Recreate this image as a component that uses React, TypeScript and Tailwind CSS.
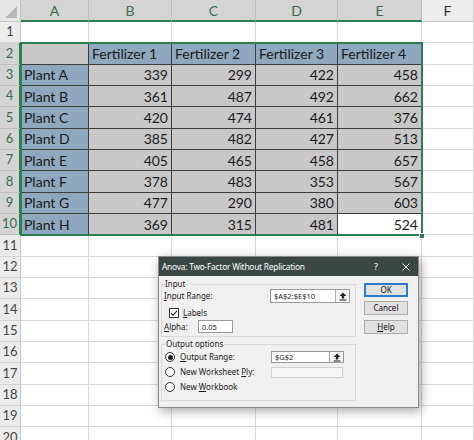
import React from "react";

const COLS = ["A", "B", "C", "D", "E", "F"];
const HEAD = ["Fertilizer 1", "Fertilizer 2", "Fertilizer 3", "Fertilizer 4"];
const DATA: [string, number[]][] = [
  ["Plant A", [339, 299, 422, 458]],
  ["Plant B", [361, 487, 492, 662]],
  ["Plant C", [420, 474, 461, 376]],
  ["Plant D", [385, 482, 427, 513]],
  ["Plant E", [405, 465, 458, 657]],
  ["Plant F", [378, 483, 353, 567]],
  ["Plant G", [477, 290, 380, 603]],
  ["Plant H", [369, 315, 481, 524]],
];
const TOTAL_ROWS = 20;

function RowHeader({ n }: { n: number }) {
  const sel = n >= 2 && n <= 10;
  return (
    <div
      className={
        "flex items-center justify-center border-b text-[13px] " +
        (sel
          ? "bg-[#d4d4d4] border-[#c0c0c0] border-r-2 border-r-[#2e7d50] text-[#3d6a4f]"
          : "bg-[#ececec] border-[#d4d4d4] border-r border-r-[#c6c6c6] text-[#444]")
      }
    >
      {n}
    </div>
  );
}

function Cell({
  children,
  kind,
  align = "left",
}: {
  children?: React.ReactNode;
  kind: "blank" | "label" | "corner" | "data" | "white";
  align?: "left" | "right";
}) {
  const bg =
    kind === "label"
      ? "bg-[#8ea8bf] border-[#3d3d3d]"
      : kind === "corner" || kind === "data"
        ? "bg-[#c8c8c8] border-[#3d3d3d]"
        : kind === "white"
          ? "bg-white border-[#3d3d3d]"
          : "bg-white border-[#dadada]";
  return (
    <div
      className={
        "flex items-center border-r border-b px-[3px] text-[14px] text-[#1b1b1b] overflow-hidden whitespace-nowrap " +
        bg +
        (align === "right" ? " justify-end" : "")
      }
    >
      {children}
    </div>
  );
}

function CollapseButton() {
  return (
    <div className="flex h-full w-[14px] items-center justify-center border-l border-[#adadad] bg-[#f4f4f4]">
      <svg width="8" height="9" viewBox="0 0 8 9">
        <path d="M4 0.5 L7.5 4 L5.2 4 L5.2 6.5 L2.8 6.5 L2.8 4 L0.5 4 Z" fill="#222" />
        <rect x="0.5" y="7.5" width="7" height="1" fill="#222" />
      </svg>
    </div>
  );
}

function Radio({ checked }: { checked?: boolean }) {
  return (
    <span className="flex h-[10px] w-[10px] items-center justify-center rounded-full border border-[#333] bg-white">
      {checked && <span className="h-[5px] w-[5px] rounded-full bg-[#222]" />}
    </span>
  );
}

function Button({ children, focused }: { children: React.ReactNode; focused?: boolean }) {
  return (
    <div
      className={
        "flex h-[14px] w-[44px] items-center justify-center bg-[#e1e1e1] text-[8px] text-[#111] " +
        (focused ? "border-2 border-[#2a7bd0]" : "border border-[#adadad]")
      }
    >
      {children}
    </div>
  );
}

function AnovaDialog() {
  return (
    <div
      className="absolute left-[158px] top-[256px] flex h-[152px] w-[261px] flex-col border border-[#8a8a8a] bg-[#f0f0f0] text-[8px] leading-[10px] text-[#1a1a1a] shadow-[2px_3px_10px_rgba(0,0,0,0.35)]"
      style={{ fontFamily: '"Noto Sans", "Open Sans", sans-serif' }}
    >
      <div className="flex h-[19px] shrink-0 items-center bg-[#3b4744] pl-[3px] pr-[8px] text-[8.3px] text-white">
        <span className="tracking-[-0.2px]">Anova: Two-Factor Without Replication</span>
        <span className="ml-auto mr-[24px] text-[9px]">?</span>
        <svg width="8" height="8" viewBox="0 0 8 8">
          <path d="M0.5 0.5 L7.5 7.5 M7.5 0.5 L0.5 7.5" stroke="#fff" strokeWidth="1" />
        </svg>
      </div>

      <div className="flex pl-[2px] pt-[3px]">
        <div className="flex w-[195px] flex-col">
          <fieldset className="flex flex-col border border-[#d9d9d9] pb-[3px] pl-[2px] pr-[4px]">
            <legend className="ml-[1px] px-0">Input</legend>
            <div className="flex h-[14px] items-center">
              <span className="w-[106px]">
                <u>I</u>nput Range:
              </span>
              <div className="flex h-[14px] w-[80px] items-center border border-[#9a9a9a] bg-white">
                <span className="flex-1 pl-[3px] text-[7.5px]">$A$2:$E$10</span>
                <CollapseButton />
              </div>
            </div>
            <div className="mt-[4px] flex h-[12px] items-center pl-[5px]">
              <span className="flex h-[10px] w-[10px] items-center justify-center border border-[#333] bg-white">
                <svg width="8" height="8" viewBox="0 0 8 8">
                  <path d="M1 4 L3.2 6.2 L7 1.8" stroke="#222" strokeWidth="1.1" fill="none" />
                </svg>
              </span>
              <span className="ml-[4px]">
                <u>L</u>abels
              </span>
            </div>
            <div className="mt-[1px] flex h-[13px] items-center">
              <span className="w-[34px]">
                <u>A</u>lpha:
              </span>
              <div className="flex h-[13px] w-[35px] items-center border border-[#9a9a9a] bg-white pl-[3px] text-[7.5px]">
                0.05
              </div>
            </div>
          </fieldset>

          <fieldset className="mt-[2px] flex flex-col border border-[#d9d9d9] pb-[7px] pl-[3px] pr-[4px]">
            <legend className="ml-[1px] px-0">Output options</legend>
            <div className="mt-[2px] flex h-[12px] items-center">
              <Radio checked />
              <span className="ml-[5px] w-[91px]">
                <u>O</u>utput Range:
              </span>
              <div className="flex h-[12px] w-[73px] items-center border border-[#9a9a9a] bg-white">
                <span className="flex-1 pl-[3px] text-[7.5px]">$G$2</span>
                <CollapseButton />
              </div>
            </div>
            <div className="mt-[3px] flex h-[12px] items-center">
              <Radio />
              <span className="ml-[5px] w-[91px]">
                New Worksheet <u>P</u>ly:
              </span>
              <div className="h-[11px] w-[72px] border border-[#cfcfcf] bg-[#f7f7f7]" />
            </div>
            <div className="mt-[3px] flex h-[12px] items-center">
              <Radio />
              <span className="ml-[5px]">
                New <u>W</u>orkbook
              </span>
            </div>
          </fieldset>
        </div>

        <div className="ml-[8px] flex flex-col pt-[4px]">
          <Button focused>OK</Button>
          <div className="mt-[4px]">
            <Button>Cancel</Button>
          </div>
          <div className="mt-[5px]">
            <Button>
              <span>
                <u>H</u>elp
              </span>
            </Button>
          </div>
        </div>
      </div>
    </div>
  );
}

export default function App() {
  const cells: React.ReactNode[] = [];

  // header row
  cells.push(
    <div key="corner" className="relative border-b border-r border-[#c6c6c6] bg-[#e6e6e6]">
      <svg className="absolute bottom-[3px] right-[3px]" width="12" height="12" viewBox="0 0 12 12">
        <path d="M12 0 L12 12 L0 12 Z" fill="#b9b9b9" />
      </svg>
    </div>
  );
  COLS.forEach((c, i) => {
    const sel = i < 5;
    cells.push(
      <div
        key={"h" + c}
        className={
          "flex items-center justify-center border-r text-[14px] " +
          (sel
            ? "bg-[#d4d4d4] border-[#bdbdbd] border-b-2 border-b-[#2e7d50] text-[#3d6a4f]"
            : "bg-[#ededed] border-[#d0d0d0] border-b border-b-[#c6c6c6] text-[#333]")
        }
      >
        {c}
      </div>
    );
  });

  for (let r = 1; r <= TOTAL_ROWS; r++) {
    cells.push(<RowHeader key={"r" + r} n={r} />);
    for (let c = 0; c < 6; c++) {
      const k = r + "-" + c;
      if (r === 2 && c === 0) cells.push(<Cell key={k} kind="corner" />);
      else if (r === 2 && c >= 1 && c <= 4)
        cells.push(
          <Cell key={k} kind="label">
            {HEAD[c - 1]}
          </Cell>
        );
      else if (r >= 3 && r <= 10 && c === 0)
        cells.push(
          <Cell key={k} kind="label">
            {DATA[r - 3][0]}
          </Cell>
        );
      else if (r >= 3 && r <= 10 && c >= 1 && c <= 4)
        cells.push(
          <Cell key={k} kind={r === 10 && c === 4 ? "white" : "data"} align="right">
            {DATA[r - 3][1][c - 1]}
          </Cell>
        );
      else cells.push(<Cell key={k} kind="blank" />);
    }
  }

  return (
    <div
      className="relative h-[440px] w-[474px] overflow-hidden bg-white"
      style={{ fontFamily: 'Lato, "Open Sans", sans-serif' }}
    >
      <div className="grid grid-cols-[21px_68px_83px_84px_82px_84px_52px] grid-rows-[22px_repeat(20,21.33px)]">
        {cells}
      </div>

      {/* selection outline around A2:E10 with fill handle */}
      <div className="pointer-events-none absolute left-[20px] top-[42px] h-[194px] w-[403px] border-2 border-[#2e7d50]" />
      <div className="absolute left-[419px] top-[233px] h-[6px] w-[6px] border border-white bg-[#2e7d50]" />

      <AnovaDialog />
    </div>
  );
}
